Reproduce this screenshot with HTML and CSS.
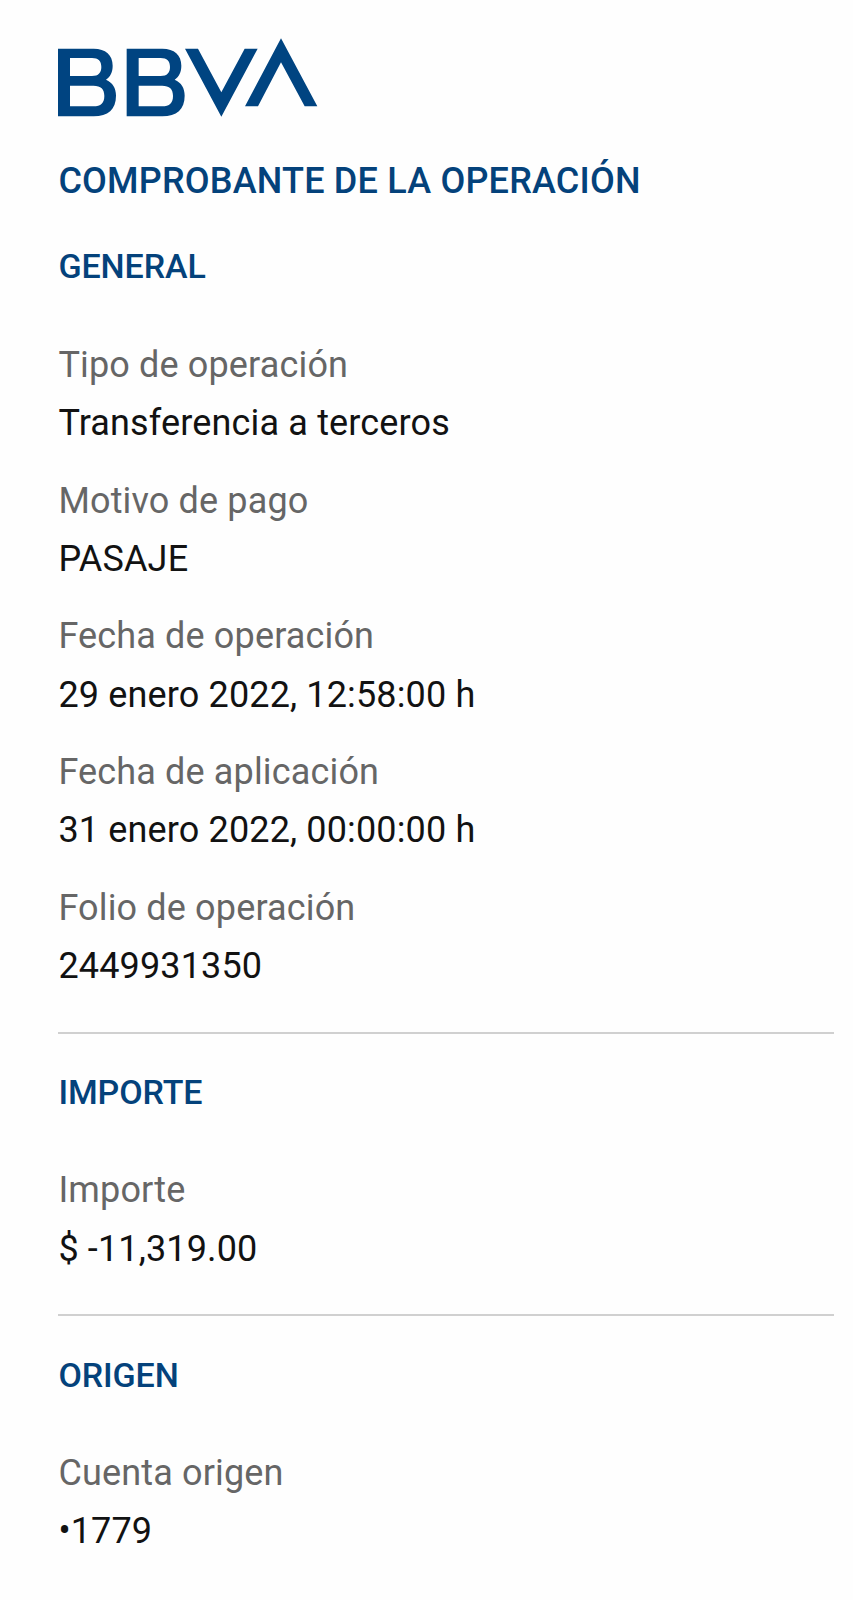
FILE: index.html
```html
<!DOCTYPE html>
<html lang="es">
<head>
<meta charset="utf-8">
<title>Comprobante de la operación</title>
<link rel="stylesheet" href="styles.css">
</head>
<body>
<main class="receipt">
  <svg class="logo" viewBox="54 54 780 237" role="img" aria-label="BBVA">
    <g fill="currentColor" fill-rule="evenodd">
      <path id="b" d="M54 86H161C197 86 218 105 218 137C218 156 211 170 198 179C218 188 228 204 228 227C228 268 204 289 161 289H54ZM90 114V168H156C176 168 184 158 184 141C184 123 175 114 156 114ZM90 197V259H160C183 259 193 249 193 228C193 207 183 197 160 197Z"/>
      <use href="#b" x="206"/>
      <path d="M435 86H474L544 217L614 86H653L544 290Z"/>
      <path d="M723 55L832 259H794L723 127L654 259H615Z"/>
    </g>
  </svg>
  <h1 class="title">COMPROBANTE DE LA OPERACIÓN</h1>

  <section class="section">
    <h2 class="heading">GENERAL</h2>
    <dl class="list">
      <div class="item"><dt>Tipo de operación</dt><dd>Transferencia a terceros</dd></div>
      <div class="item"><dt>Motivo de pago</dt><dd>PASAJE</dd></div>
      <div class="item"><dt>Fecha de operación</dt><dd>29 enero 2022, 12:58:00 h</dd></div>
      <div class="item"><dt>Fecha de aplicación</dt><dd>31 enero 2022, 00:00:00 h</dd></div>
      <div class="item"><dt>Folio de operación</dt><dd>2449931350</dd></div>
    </dl>
  </section>

  <section class="section divided">
    <h2 class="heading">IMPORTE</h2>
    <dl class="list">
      <div class="item"><dt>Importe</dt><dd>$ -11,319.00</dd></div>
    </dl>
  </section>

  <section class="section divided">
    <h2 class="heading">ORIGEN</h2>
    <dl class="list">
      <div class="item"><dt>Cuenta origen</dt><dd>•1779</dd></div>
    </dl>
  </section>
</main>
</body>
</html>
```
FILE: styles.css
```css
* { box-sizing: border-box; }
body {
  margin: 0;
  background: #fefefe;
  color: #121212;
  font-family: Roboto, sans-serif;
  font-size: 36px;
}
.receipt {
  display: flex;
  flex-direction: column;
  height: 1600px;
  overflow: hidden;
  padding: 38px 19.5px 0 58.4px;
}
.logo {
  display: block;
  flex: none;
  width: 260px;
  height: 79px;
  color: #004481;
}
.title, .heading {
  margin: 0;
  color: #04427b;
  font-weight: 500;
  line-height: 40px;
  white-space: nowrap;
}
.title {
  margin: 44px 0 44.5px;
  font-size: 36px;
  letter-spacing: 0.2px;
}
.heading {
  margin-bottom: 50.4px;
  font-size: 34px;
  letter-spacing: -0.1px;
}
.list {
  display: flex;
  flex-direction: column;
  gap: 19.4px;
  margin: 0;
}
.item { line-height: 58.2px; letter-spacing: 0.15px; }
.item dt { color: #666; }
.item dd { margin: 0; }
.divided {
  margin-top: 36.5px;
  padding-top: 38.2px;
  border-top: 2px solid #d0d0d0;
}
.divided .heading { margin-bottom: 49.3px; }
```
